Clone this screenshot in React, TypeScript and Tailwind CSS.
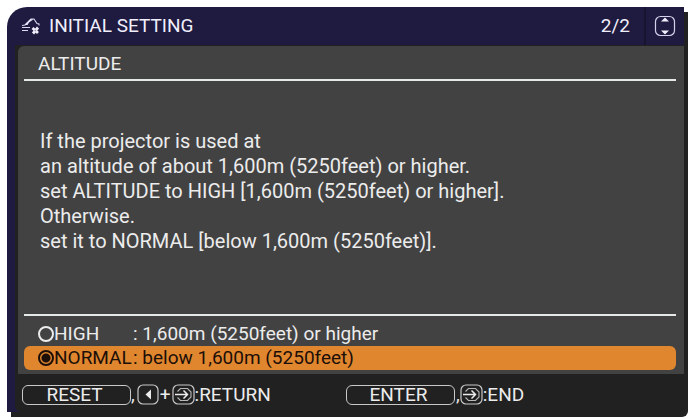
import React, { useState } from 'react';

type Altitude = 'high' | 'normal';

interface AltitudeOptionProps {
  value: Altitude;
  name: string;
  description: string;
  selected: boolean;
  onSelect: (value: Altitude) => void;
}

const AltitudeIcon = () => (
  <svg viewBox="0 0 20 18" className="w-5 h-[18px] shrink-0" fill="none" aria-hidden="true">
    <path d="M1 8.500l3-.5 6-6h3l3 4.500 2 .5v1.500" stroke="#dcd8f2" strokeWidth="1.1" />
    <path d="M3.500 8l6-6 3 .5-2.500 1.500-2 1.500-1.500 2.500z" fill="#e9e6fb" />
    <path d="M1 10.500h8M1 13.500h6" stroke="#dcd8f2" strokeWidth="1.2" />
    <path d="M11.500 11l5.500 5M17 10.500l-5 6" stroke="#f1effc" strokeWidth="2.8" />
    <path d="M14.300 12.500l1 1-1 1-1-1z" fill="#8d88b0" />
  </svg>
);

const UpDownIcon = () => (
  <svg viewBox="0 0 22 22" className="w-[22px] h-[22px]" fill="none" aria-hidden="true">
    <rect x="1.5" y="1.500" width="19" height="19" rx="5" stroke="#d5d1ec" strokeWidth="1.200" />
    <path d="M7 6.500L11 2.500l4 4zM7 15.500l4 4 4-4z" fill="#f1effc" />
  </svg>
);

const LeftKeyIcon = () => (
  <svg viewBox="0 0 22 22" className="w-[22px] h-[22px]" fill="none" aria-hidden="true">
    <rect x="1" y="1" width="20" height="19" rx="5" stroke="#c9c9c9" strokeWidth="1.2" />
    <path d="M14 5.500v10l-5.500-5z" fill="#ececec" />
  </svg>
);

const InputKeyIcon = () => (
  <svg viewBox="0 0 23 22" className="w-[23px] h-[22px]" fill="none" aria-hidden="true">
    <rect x="1" y="1" width="21" height="19" rx="5" stroke="#c9c9c9" strokeWidth="1.2" />
    <path d="M5.500 7.500l3-3h7l3.500 3.500v5l-3.500 3.500h-7l-3-3" stroke="#b9b9b9" strokeWidth="1.1" />
    <path d="M3 10.500h12M11.500 6.500l4 4-4 4" stroke="#ececec" strokeWidth="1.5" />
  </svg>
);

const AltitudeOption: React.FC<AltitudeOptionProps> = ({
  value,
  name,
  description,
  selected,
  onSelect
}) => (
  <label
    className={`flex items-center h-6 pl-[14px] rounded-md whitespace-nowrap ${
      selected ? 'bg-[#e0862f] text-[#1c0f08]' : ''
    }`}
  >
    <input
      type="radio"
      name="altitude"
      value={value}
      checked={selected}
      onChange={() => onSelect(value)}
      className="appearance-none w-4 h-4 shrink-0 rounded-full border-2 border-current checked:bg-[radial-gradient(circle,currentColor_4px,transparent_5px)]"
    />
    <span className="w-[79px]">{name}</span>
    <span>: {description}</span>
  </label>
);

const keyClass =
  'w-[109px] h-5 pr-1 rounded-md border border-[#c9c9c9] leading-[18px] text-center';

export default function App() {
  const [altitude, setAltitude] = useState<Altitude>('normal');

  return (
    <div className="bg-white pt-[7px] pl-[7px] pr-[6px] pb-[6px] font-['Roboto',sans-serif] text-[19px] text-[#ececec]">
      <main className="bg-[#1f1b40] rounded-tl-[20px] rounded-br-md shadow-[4px_5px_0_#212121]">
        <header className="flex items-center h-[38px] pl-[14px] text-[#f1effc]">
          <AltitudeIcon />
          <h1 className="pl-2">INITIAL SETTING</h1>
          <span className="ml-auto pr-[14px]">2/2</span>
          <div className="flex items-center self-stretch pl-2 pr-2 border-l-2 border-[#17142f]">
            <button type="button" aria-label="Change page">
              <UpDownIcon />
            </button>
          </div>
        </header>

        <div className="ml-2 pl-[3px] pt-px bg-[#212121] rounded-bl-md rounded-br-md">
          <section className="bg-[#424242] rounded-tl-md pl-[6px] pr-2 pb-1">
            <h2 className="h-[35px] pl-[14px] leading-[36px] border-b-2 border-[#e4e8e6]">ALTITUDE</h2>

            <p className="h-[233px] pt-12 pl-4 text-xl leading-[25px] whitespace-nowrap">
              If the projector is used at<br />
              an altitude of about 1,600m (5250feet) or higher.<br />
              set ALTITUDE to HIGH [1,600m (5250feet) or higher].<br />
              Otherwise.<br />
              set it to NORMAL [below 1,600m (5250feet)].
            </p>

            <fieldset className="pt-1.5 border-t-2 border-[#e4e8e6]" aria-label="ALTITUDE">
              <AltitudeOption
                value="high"
                name="HIGH"
                description="1,600m (5250feet) or higher"
                selected={altitude === 'high'}
                onSelect={setAltitude}
              />
              <AltitudeOption
                value="normal"
                name="NORMAL"
                description="below 1,600m (5250feet)"
                selected={altitude === 'normal'}
                onSelect={setAltitude}
              />
            </fieldset>
          </section>

          <footer className="flex items-center h-[38px] pt-1 pl-1 whitespace-nowrap">
            <div className="flex items-center w-[324px]">
              <button type="button" className={keyClass}>RESET</button>
              <span className="pr-0.5">,</span>
              <LeftKeyIcon />
              <span className="px-px">+</span>
              <InputKeyIcon />
              <span>:RETURN</span>
            </div>
            <div className="flex items-center">
              <button type="button" className={keyClass}>ENTER</button>
              <span className="pl-px">,</span>
              <InputKeyIcon />
              <span>:END</span>
            </div>
          </footer>
        </div>
      </main>
    </div>
  );
}
